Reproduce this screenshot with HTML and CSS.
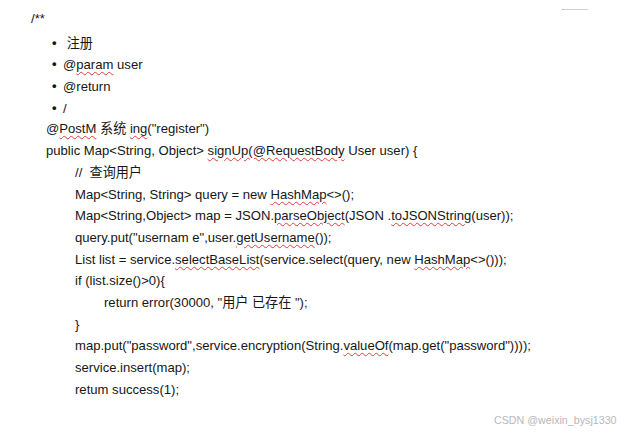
FILE: index.html
```html
<!DOCTYPE html>
<html>
<head>
  <title>signUp</title>
  <link rel="stylesheet" href="styles.css">
</head>
<body>
  <div class="page">
    <div class="code">
      <div class="line first lv0">/**</div>
      <div class="line lv1"><span class="dot">•</span> 注册</div>
      <div class="line lv1"><span class="dot">•</span>@<span class="err">param</span> user</div>
      <div class="line lv1"><span class="dot">•</span>@return</div>
      <div class="line lv1"><span class="dot">•</span>/</div>
      <div class="line lv2">@<span class="err">PostM</span> 系统 <span class="err">ing</span>("register")</div>
      <div class="line lv2">public Map&lt;String, Object&gt; <span class="err">signUp(@RequestBody</span> User user) {</div>
      <div class="line lv3">// &nbsp;查询用户</div>
      <div class="line lv3">Map&lt;String, String&gt; query = new <span class="err">HashMap</span>&lt;&gt;();</div>
      <div class="line lv3">Map&lt;String,Object&gt; map = JSON.<span class="err">parseObject</span>(JSON .<span class="err">toJSONString</span>(user));</div>
      <div class="line lv3">query.put("usernam e",user.<span class="err">getUsername</span>());</div>
      <div class="line lv3">List list = service.<span class="err">selectBaseList</span>(service.select(query, new <span class="err">HashMap</span>&lt;&gt;()));</div>
      <div class="line lv3">if (list.size()&gt;0){</div>
      <div class="line lv4">return error(30000, "用户 已存在 ");</div>
      <div class="line lv3">}</div>
      <div class="line lv3">map.put("password",service.encryption(String.<span class="err">valueOf</span>(map.get("password"))));</div>
      <div class="line lv3">service.insert(map);</div>
      <div class="line lv3">retum success(1);</div>
    </div>
    <div class="corner-mark"></div>
    <div class="watermark">CSDN @weixin_bysj1330</div>
  </div>
</body>
</html>
```

FILE: styles.css
```css
body {
  margin: 0;
  padding: 0;
  background: #fff;
  font-family: "Liberation Sans", Arial, "Noto Sans CJK SC", sans-serif;
}
.page {
  position: relative;
  width: 626px;
  height: 432px;
  overflow: hidden;
}
.code {
  padding-top: 8px;
  font-size: 13.1px;
  color: #161616;
}
.line {
  height: 21.7px;
  line-height: 21.7px;
  white-space: nowrap;
}
.first {
  margin-bottom: 2px;
}
.lv0 { padding-left: 31px; }
.lv1 { padding-left: 52px; }
.lv2 { padding-left: 46px; }
.lv3 { padding-left: 75px; }
.lv4 { padding-left: 104px; }
.dot {
  display: inline-block;
  width: 11px;
  font-size: 13px;
  font-weight: bold;
  vertical-align: 1px;
}
.err {
  text-decoration: underline wavy #e23b3b;
  text-decoration-thickness: 1px;
  text-underline-offset: 2px;
}
.corner-mark {
  position: absolute;
  top: 9px;
  left: 562px;
  width: 25px;
  height: 1px;
  border-left: 1px solid #b0b0b0;
  background: #cfcfcf;
}
.watermark {
  position: absolute;
  top: 414px;
  left: 494px;
  font-size: 10.7px;
  color: #b8b8b8;
}
```
